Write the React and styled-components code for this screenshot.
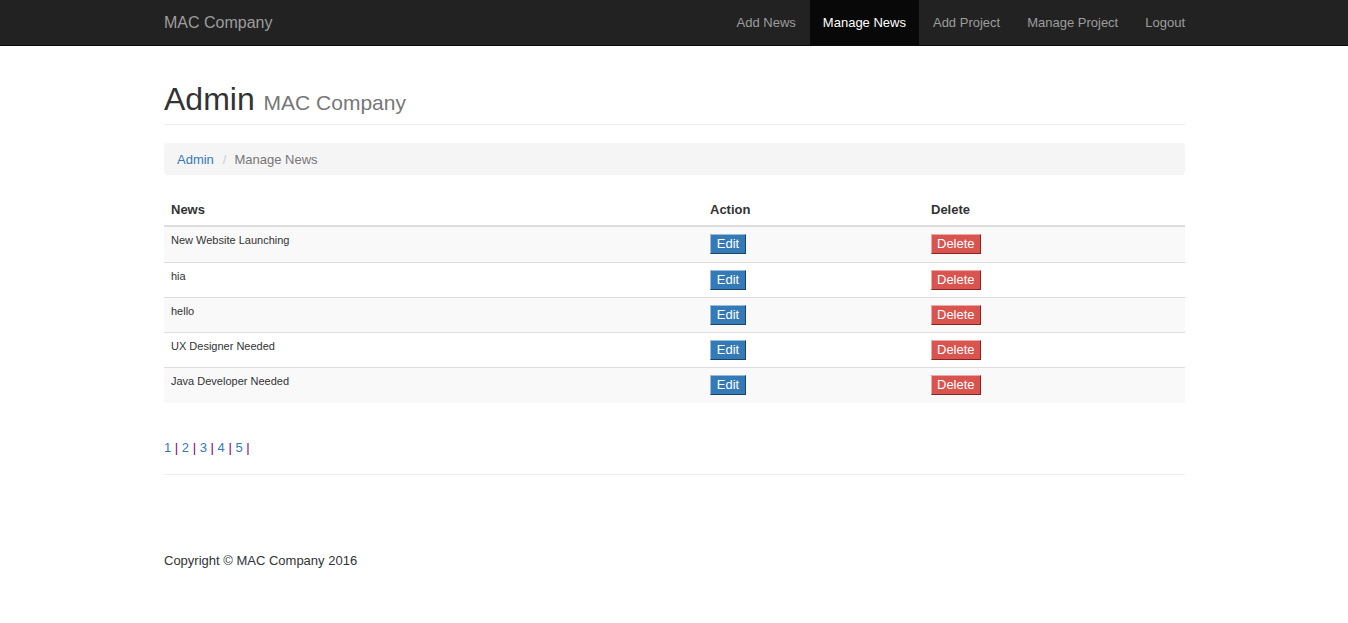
import React from "react";
import styled, { createGlobalStyle } from "styled-components";

const GlobalStyle = createGlobalStyle`
  *, *::before, *::after { box-sizing: border-box; }
  body {
    margin: 0;
    background: #fff;
    color: #333;
    font: 13px/18px "Liberation Sans", Arial, sans-serif;
  }
  a { color: #337ab7; text-decoration: none; }
  a:hover { text-decoration: underline; }
`;

const Container = styled.div`
  width: 100%;
  max-width: 1048px;
  margin: 0 auto;
  padding: 0 13px 0 14px;
`;

const Navbar = styled.nav`
  background: #222;
  border-bottom: 1px solid #080808;
`;

const NavInner = styled(Container)`
  display: flex;
  justify-content: space-between;
  padding-right: 0;
`;

const Brand = styled.a`
  && { color: #9d9d9d; }
  font-size: 16px;
  line-height: 18px;
  padding: 14px 0 13px;
`;

const Menu = styled.ul`
  display: flex;
  flex-wrap: wrap;
  gap: 1px;
  margin: 0;
  padding: 0;
  list-style: none;
`;

const MenuLink = styled.a`
  && { color: ${(p) => (p.$active ? "#fff" : "#9d9d9d")}; }
  display: block;
  padding: 14px 13px 13px;
  background: ${(p) => (p.$active ? "#080808" : "transparent")};
`;

const Title = styled.h1`
  margin: 36px 0 18px;
  padding-bottom: 7px;
  border-bottom: 1px solid #eee;
  font-size: 32px;
  line-height: 35px;
  font-weight: 400;
`;

const Subtitle = styled.small`
  font-size: 21px;
  line-height: 21px;
  color: #777;
`;

const Breadcrumb = styled.ol`
  display: flex;
  margin: 0 0 18px;
  padding: 8px 13px 6px;
  list-style: none;
  background: #f5f5f5;
  border-radius: 4px;
`;

const Crumb = styled.li`
  color: #777;
  & + &::before {
    content: "/";
    padding: 0 8px 0 9px;
    color: #ccc;
  }
`;

const Table = styled.table`
  width: 100%;
  table-layout: fixed;
  border-spacing: 0;
  margin-bottom: 36px;
`;

const Column = styled.col`
  width: ${(p) => p.$width};
`;

const HeadCell = styled.th`
  padding: 8px 7px 6px;
  text-align: left;
  border-bottom: 2px solid #ddd;
`;

const Row = styled.tr`
  &:nth-child(odd) { background: #f9f9f9; }
  & + & > td { border-top: 1px solid #ddd; }
  &:last-child > td { height: 36px; }
`;

const Cell = styled.td`
  height: 35px;
  padding: 7px;
  vertical-align: top;
  line-height: 20px;
`;

const NewsCell = styled(Cell)`
  font-size: 11px;
  line-height: 13px;
`;

const tones = {
  edit: ["#337ab7", "#99bcdb", "#1a4469"],
  remove: ["#d9534f", "#eca9a7", "#8a2422"],
};

const ActionButton = styled.button`
  display: block;
  min-width: 36px;
  height: 20px;
  padding: 0 5px;
  border: 1px solid;
  border-color: ${(p) => {
    const [, light, dark] = tones[p.$tone];
    return `${light} ${dark} ${dark} ${light}`;
  }};
  background: ${(p) => tones[p.$tone][0]};
  color: #fff;
  font: inherit;
  line-height: 18px;
  cursor: pointer;
`;

const Pager = styled.nav`
  color: purple;
`;

const Divider = styled.hr`
  margin: 17px 0 18px;
  border: 0;
  border-top: 1px solid #eee;
`;

const Footer = styled.footer`
  margin: 77px 0 45px;
`;

const menu = ["Add News", "Manage News", "Add Project", "Manage Project", "Logout"];
const news = ["New Website Launching", "hia", "hello", "UX Designer Needed", "Java Developer Needed"];
const pages = [1, 2, 3, 4, 5];

export default function App() {
  return (
    <>
      <GlobalStyle />
      <Navbar>
        <NavInner>
          <Brand href="#">MAC Company</Brand>
          <Menu>
            {menu.map((item) => (
              <li key={item}>
                <MenuLink href="#" $active={item === "Manage News"}>{item}</MenuLink>
              </li>
            ))}
          </Menu>
        </NavInner>
      </Navbar>
      <Container>
        <Title>Admin <Subtitle>MAC Company</Subtitle></Title>
        <Breadcrumb>
          <Crumb><a href="#">Admin</a></Crumb>
          <Crumb>Manage News</Crumb>
        </Breadcrumb>
        <Table>
          <colgroup>
            <Column />
            <Column $width="221px" />
            <Column $width="261px" />
          </colgroup>
          <thead>
            <tr>
              <HeadCell>News</HeadCell>
              <HeadCell>Action</HeadCell>
              <HeadCell>Delete</HeadCell>
            </tr>
          </thead>
          <tbody>
            {news.map((item) => (
              <Row key={item}>
                <NewsCell>{item}</NewsCell>
                <Cell><ActionButton type="button" $tone="edit">Edit</ActionButton></Cell>
                <Cell><ActionButton type="button" $tone="remove">Delete</ActionButton></Cell>
              </Row>
            ))}
          </tbody>
        </Table>
        <Pager aria-label="Pages">
          {pages.map((page) => (
            <React.Fragment key={page}>
              <a href="#">{page}</a>{" | "}
            </React.Fragment>
          ))}
        </Pager>
        <Divider />
        <Footer>Copyright © MAC Company 2016</Footer>
      </Container>
    </>
  );
}
